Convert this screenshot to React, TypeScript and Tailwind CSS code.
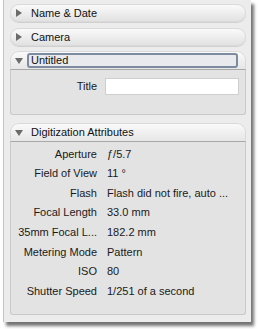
import React from "react";

const font = { fontFamily: '"Liberation Sans", Arial, sans-serif' };

function Triangle({ open }: { open?: boolean }) {
  return (
    <svg width="8" height="8" viewBox="0 0 8 8" className="shrink-0">
      {open ? (
        <path d="M0 1 L8 1 L4 7 Z" fill="#6b6b6b" />
      ) : (
        <path d="M1 0 L7 4 L1 8 Z" fill="#6b6b6b" />
      )}
    </svg>
  );
}

function ClosedHeader({ title }: { title: string }) {
  return (
    <div className="h-[18px] rounded-[9px] border border-[#dadada] bg-gradient-to-b from-[#fafafa] to-[#e2e2e2] flex items-center pl-[4px] gap-[8px] shadow-[0_1px_0_#d0d0d0]">
      <Triangle />
      <span className="text-[11px] text-[#111]">{title}</span>
    </div>
  );
}

function Row({ label, value }: { label: string; value: string }) {
  return (
    <div className="h-[19.6px] flex items-center text-[11px] text-[#1a1a1a]">
      <div className="w-[86px] text-right shrink-0 whitespace-nowrap">{label}</div>
      <div className="pl-[10px] whitespace-nowrap">{value}</div>
    </div>
  );
}

export default function App() {
  const rows: [string, string][] = [
    ["Aperture", "ƒ/5.7"],
    ["Field of View", "11 °"],
    ["Flash", "Flash did not fire, auto ..."],
    ["Focal Length", "33.0 mm"],
    ["35mm Focal L...", "182.2 mm"],
    ["Metering Mode", "Pattern"],
    ["ISO", "80"],
    ["Shutter Speed", "1/251 of a second"],
  ];

  return (
    <div className="w-[260px] h-[329px] bg-white" style={font}>
      <div className="ml-[3px] w-[248px] h-[322px] bg-[#ececec] border-l border-[#c4c4c4] shadow-[3px_4px_3px_rgba(0,0,0,0.55)] pl-[6px] pr-[5px] pt-[4px] flex flex-col">
        <ClosedHeader title="Name & Date" />
        <div className="h-[6px]" />
        <ClosedHeader title="Camera" />
        <div className="h-[5px]" />

        {/* Untitled section */}
        <div className="flex flex-col">
          <div className="h-[18px] rounded-t-[9px] border border-b-0 border-[#dadada] bg-gradient-to-b from-[#fafafa] to-[#e6e6e6] flex items-center pl-[4px] gap-[4px]">
            <Triangle open />
            <div className="flex-1 mr-[7px] h-[15px] rounded-[3px] border-2 border-[#7c8ba0] bg-[#e8eaee] flex items-center pl-[2px] text-[11px] text-[#111]">
              Untitled
            </div>
          </div>
          <div className="h-[46px] border border-[#c8c8c8] border-t-[#a8a8a8] rounded-b-[3px] bg-[#e3e3e3] flex items-start pt-[8px]">
            <div className="w-[86px] text-right text-[11px] text-[#1a1a1a] leading-[17px]">Title</div>
            <div className="ml-[8px] w-[134px] h-[17px] bg-white border border-[#cfcfcf]" />
          </div>
        </div>

        <div className="h-[8px]" />

        {/* Digitization section */}
        <div className="flex flex-col">
          <div className="h-[18px] rounded-t-[9px] border border-b-0 border-[#dadada] bg-gradient-to-b from-[#fafafa] to-[#e6e6e6] flex items-center pl-[4px] gap-[8px]">
            <Triangle open />
            <span className="text-[11px] text-[#111]">Digitization Attributes</span>
          </div>
          <div className="h-[174px] border border-[#c8c8c8] border-t-[#a8a8a8] rounded-b-[3px] bg-[#e3e3e3] pt-[2px]">
            {rows.map(([l, v]) => (
              <Row key={l} label={l} value={v} />
            ))}
          </div>
        </div>
      </div>
    </div>
  );
}
